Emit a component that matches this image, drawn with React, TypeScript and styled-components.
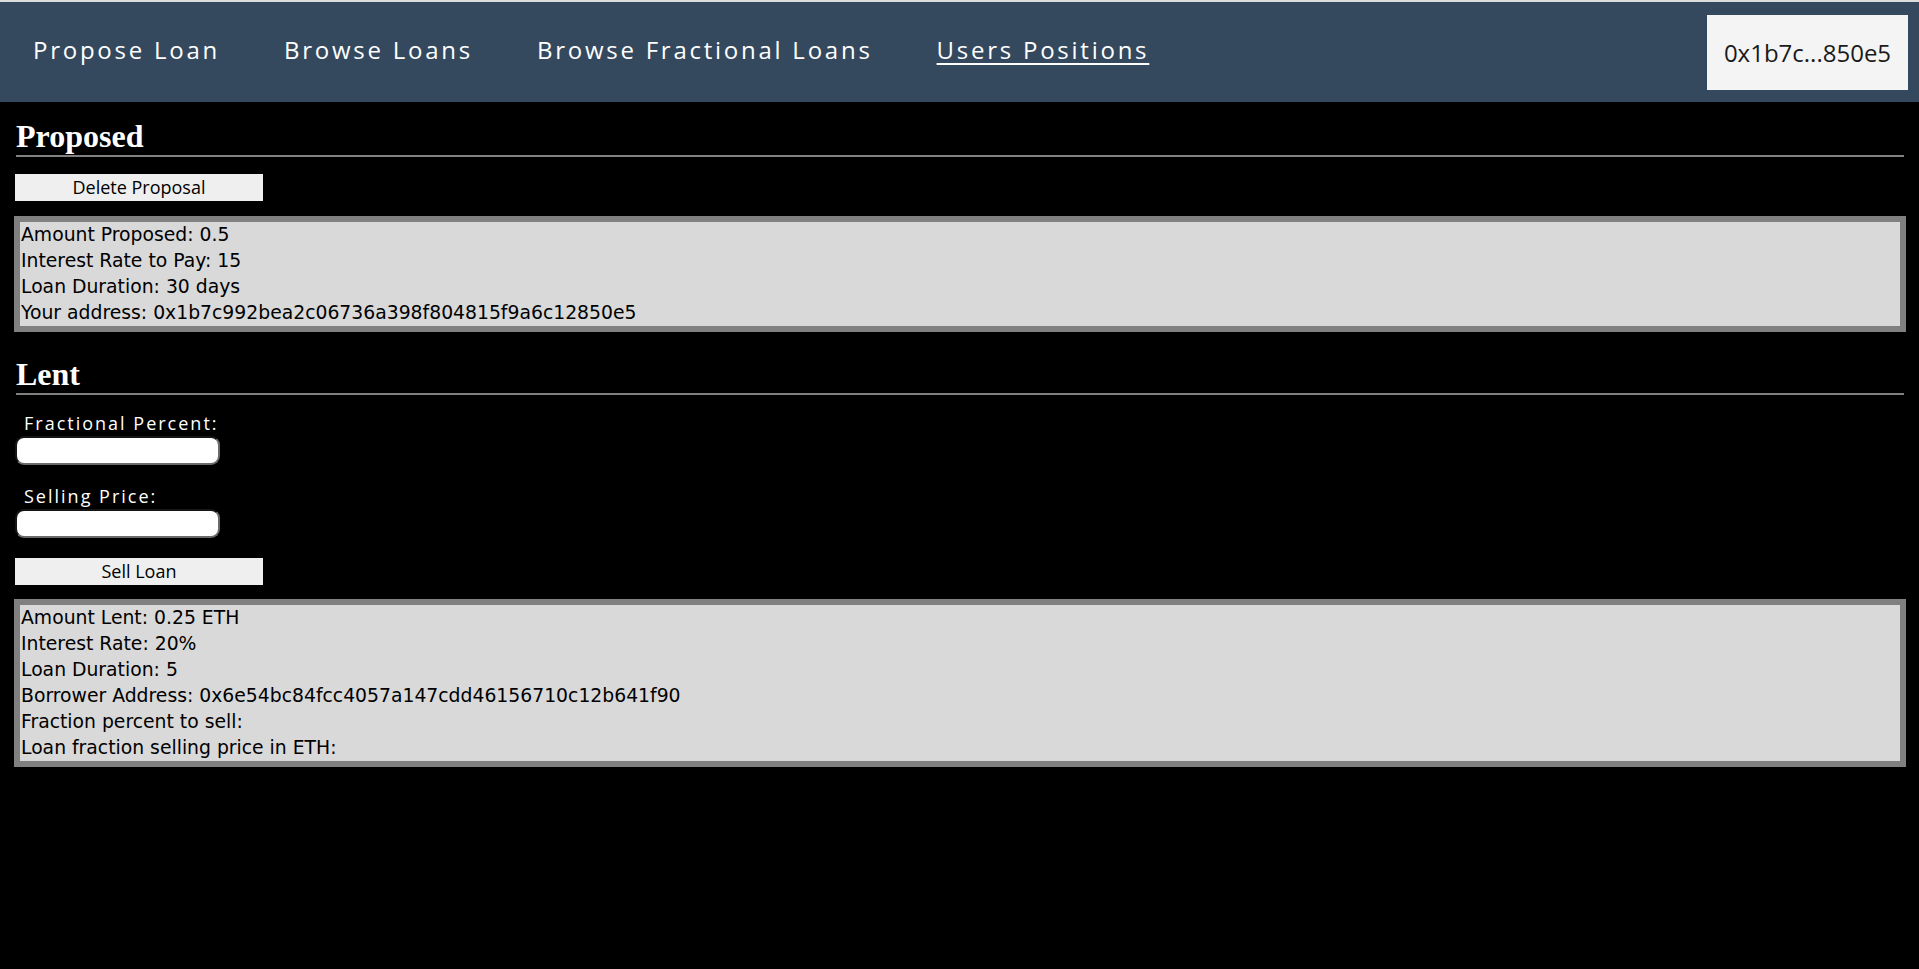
import React from 'react';
import styled, {createGlobalStyle} from "styled-components";

const GlobalStyle = createGlobalStyle`
    html, body {
        margin: 0;
        padding: 0;
        background: #000;
    }
    body {
        font-family: "DejaVu Sans", sans-serif;
    }
`

const navItems = [
    {label: 'Propose Loan', active: false},
    {label: 'Browse Loans', active: false},
    {label: 'Browse Fractional Loans', active: false},
    {label: 'Users Positions', active: true},
];

const proposedLines = [
    'Amount Proposed: 0.5',
    'Interest Rate to Pay: 15',
    'Loan Duration: 30 days',
    'Your address: 0x1b7c992bea2c06736a398f804815f9a6c12850e5',
];

const lentLines = [
    'Amount Lent: 0.25 ETH',
    'Interest Rate: 20%',
    'Loan Duration: 5',
    'Borrower Address: 0x6e54bc84fcc4057a147cdd46156710c12b641f90',
    'Fraction percent to sell:',
    'Loan fraction selling price in ETH:',
];

export default function App() {
    return (
        <Page>
            <GlobalStyle/>
            <Header>
                <Nav>
                    {navItems.map(item => (
                        <NavLink key={item.label} href="#" $active={item.active}>
                            {item.label}
                        </NavLink>
                    ))}
                </Nav>
                <Wallet>0x1b7c...850e5</Wallet>
            </Header>

            <Main>
                <SectionTitle>Proposed</SectionTitle>
                <Rule/>
                <ActionButton $top={17}>Delete Proposal</ActionButton>
                <InfoBox $top={15}>
                    {proposedLines.map(line => <InfoLine key={line}>{line}</InfoLine>)}
                </InfoBox>

                <SectionTitle $top={24}>Lent</SectionTitle>
                <Rule/>
                <Field $top={18}>
                    <FieldLabel>Fractional Percent:</FieldLabel>
                    <FieldInput type="text"/>
                </Field>
                <Field $top={21}>
                    <FieldLabel>Selling Price:</FieldLabel>
                    <FieldInput type="text"/>
                </Field>
                <ActionButton $top={20}>Sell Loan</ActionButton>
                <InfoBox $top={14}>
                    {lentLines.map(line => <InfoLine key={line}>{line}</InfoLine>)}
                </InfoBox>
            </Main>
        </Page>
    );
}

const Page = styled.div`
    min-height: 100vh;
    background: #000;
`
const Header = styled.header`
    height: 100px;
    border-top: 2px solid #dcdcdc;
    background-color: #34495e;
    display: flex;
    align-items: center;
    justify-content: space-between;
    padding: 0 11px 0 33px;
`
const Nav = styled.nav`
    display: flex;
    gap: 64px;
    margin-top: -6px;
`
const NavLink = styled.a<{ $active: boolean }>`
    font-family: "Open Sans", sans-serif;
    font-size: 24px;
    letter-spacing: 2.75px;
    color: #fff;
    text-decoration: ${p => p.$active ? 'underline' : 'none'};
    text-underline-offset: 4px;
    text-decoration-thickness: 2px;
`
const Wallet = styled.div`
    width: 201px;
    height: 75px;
    background: #f4f4f4;
    color: #1a1a1a;
    font-family: "Open Sans", sans-serif;
    font-size: 24px;
    display: flex;
    align-items: center;
    justify-content: center;
`
const Main = styled.main`
    display: flex;
    flex-direction: column;
    align-items: flex-start;
    padding: 16px 13px 0 14px;
`
const SectionTitle = styled.h1<{ $top?: number }>`
    margin: ${p => p.$top ?? 0}px 2px 1px;
    font-family: "Liberation Serif", serif;
    font-weight: bold;
    font-size: 32px;
    line-height: 36px;
    color: #fff;
`
const Rule = styled.hr`
    align-self: stretch;
    margin: 0 2px;
    border: none;
    border-top: 2px solid #808080;
`
const ActionButton = styled.button<{ $top: number }>`
    margin: ${p => p.$top}px 0 0 1px;
    width: 248px;
    height: 27px;
    padding: 0;
    border: none;
    background: #efefef;
    color: #000;
    font-family: "Open Sans", sans-serif;
    font-size: 18px;
    line-height: 27px;
`
const InfoBox = styled.div<{ $top: number }>`
    margin-top: ${p => p.$top}px;
    align-self: stretch;
    border: 6px solid #808080;
    background: #d9d9d9;
    padding: 0 1px;
`
const InfoLine = styled.div`
    font-family: "DejaVu Sans", sans-serif;
    font-size: 18.8px;
    line-height: 26px;
    color: #000;
    white-space: nowrap;
`
const Field = styled.div<{ $top: number }>`
    margin-top: ${p => p.$top}px;
    display: flex;
    flex-direction: column;
    align-items: flex-start;
    gap: 3px;
`
const FieldLabel = styled.label`
    padding-left: 10px;
    font-family: "Open Sans", sans-serif;
    font-size: 18px;
    line-height: 20px;
    letter-spacing: 2px;
    color: #fff;
`
const FieldInput = styled.input`
    box-sizing: border-box;
    margin-left: 1px;
    width: 205px;
    height: 29px;
    border: 2px inset #6a6a6a;
    border-radius: 9px;
    background: #fff;
    outline: none;
`
